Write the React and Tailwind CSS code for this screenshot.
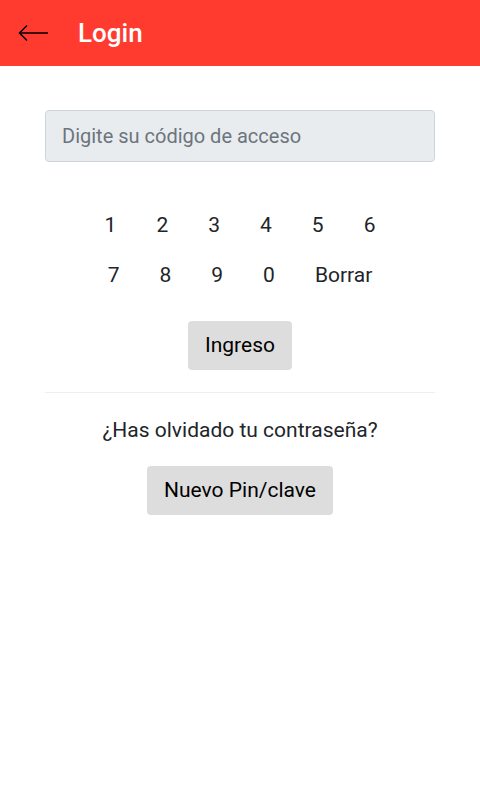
import { useState } from 'react'

const keys = [
  ['1', '2', '3', '4', '5', '6'],
  ['7', '8', '9', '0', 'Borrar'],
]

function App() {
  const [code, setCode] = useState('')

  const press = (k) => {
    if (k === 'Borrar') setCode(code.slice(0, -1))
    else setCode(code + k)
  }

  return (
    <div className="min-h-screen bg-white text-[#212529]" style={{ fontFamily: 'Roboto, "Liberation Sans", sans-serif' }}>
      {/* barra superior */}
      <header className="h-[66px] bg-[#ff3b30] flex items-center">
        <button className="ml-[18px] w-[31px] h-[20px] flex items-center" aria-label="Volver">
          <svg width="31" height="18" viewBox="0 0 31 18" fill="none" stroke="#000" strokeWidth="1.5">
            <path d="M30 9H2" />
            <path d="M9 1.5L1.5 9L9 16.5" />
          </svg>
        </button>
        <h1 className="ml-[29px] text-white text-[26px] font-medium leading-none">Login</h1>
      </header>

      <div className="px-[45px] pt-[44px]">
        <input
          type="password"
          value={code}
          readOnly
          placeholder="Digite su código de acceso"
          className="w-full h-[52px] rounded-[4px] border border-[#ced4da] bg-[#e9ecef] px-[16px] text-[20px] text-[#495057] placeholder:text-[#6c757d] outline-none"
        />

        <div className="mt-[38px] flex flex-col items-center">
          {keys.map((row, i) => (
            <div key={i} className="flex h-[50px] items-center">
              {row.map((k) => (
                <button key={k} onClick={() => press(k)} className="px-[20px] text-[21px] leading-none">
                  {k}
                </button>
              ))}
            </div>
          ))}

          <button className="mt-[21px] h-[49px] px-[17px] rounded-[4px] bg-[#dddddd] text-[21px] text-black">
            Ingreso
          </button>
        </div>

        <hr className="mt-[22px] border-0 border-t border-[#eeeeee]" />

        <div className="flex flex-col items-center">
          <p className="mt-[23px] text-[21px] leading-[28px]">¿Has olvidado tu contraseña?</p>
          <button className="mt-[22px] h-[49px] px-[17px] rounded-[4px] bg-[#dddddd] text-[21px] text-black">
            Nuevo Pin/clave
          </button>
        </div>
      </div>
    </div>
  )
}

export default App
